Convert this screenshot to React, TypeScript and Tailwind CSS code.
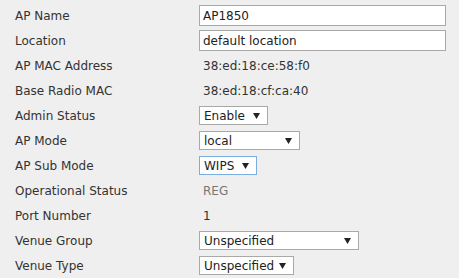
const font = { fontFamily: '"DejaVu Sans", Verdana, sans-serif' };

function Arrow() {
  return (
    <svg width="7" height="6" viewBox="0 0 7 6" className="shrink-0">
      <path d="M0 0 H7 L3.5 6 Z" fill="#222" />
    </svg>
  );
}

function Select({ value, width, focus }: { value: string; width: string; focus?: boolean }) {
  return (
    <div
      className={`flex h-[19px] items-center justify-between bg-white pl-[4px] pr-[7px] text-[12px] text-[#222] border ${
        focus ? 'border-[#7aaee0]' : 'border-[#a9a9a9]'
      } ${width}`}
    >
      <span>{value}</span>
      <Arrow />
    </div>
  );
}

function Field({ value }: { value: string }) {
  return (
    <div className="flex h-[21px] w-[247px] items-center border border-[#a9a9a9] bg-white pl-[3px] text-[12px] text-[#222]">
      {value}
    </div>
  );
}

const rows: { label: string; control: React.ReactNode }[] = [
  { label: 'AP Name', control: <Field value="AP1850" /> },
  { label: 'Location', control: <Field value="default location" /> },
  { label: 'AP MAC Address', control: <span className="pl-[4px] text-[#333]">38:ed:18:ce:58:f0</span> },
  { label: 'Base Radio MAC', control: <span className="pl-[4px] text-[#333]">38:ed:18:cf:ca:40</span> },
  { label: 'Admin Status', control: <Select value="Enable" width="w-[69px]" /> },
  { label: 'AP Mode', control: <Select value="local" width="w-[101px]" /> },
  { label: 'AP Sub Mode', control: <Select value="WIPS" width="w-[58px]" focus /> },
  { label: 'Operational Status', control: <span className="pl-[4px] text-[#777]">REG</span> },
  { label: 'Port Number', control: <span className="pl-[4px] text-[#333]">1</span> },
  { label: 'Venue Group', control: <Select value="Unspecified" width="w-[160px]" /> },
  { label: 'Venue Type', control: <Select value="Unspecified" width="w-[95px]" /> },
];

export default function App() {
  return (
    <div className="h-[278px] w-[459px] overflow-hidden bg-[#efefef] pt-[3px] text-[12px]" style={font}>
      {rows.map((r) => (
        <div key={r.label} className="grid h-[25px] grid-cols-[199px_1fr] items-center">
          <span className="pl-[15px] text-[#333]">{r.label}</span>
          <div className="flex items-center">{r.control}</div>
        </div>
      ))}
    </div>
  );
}
